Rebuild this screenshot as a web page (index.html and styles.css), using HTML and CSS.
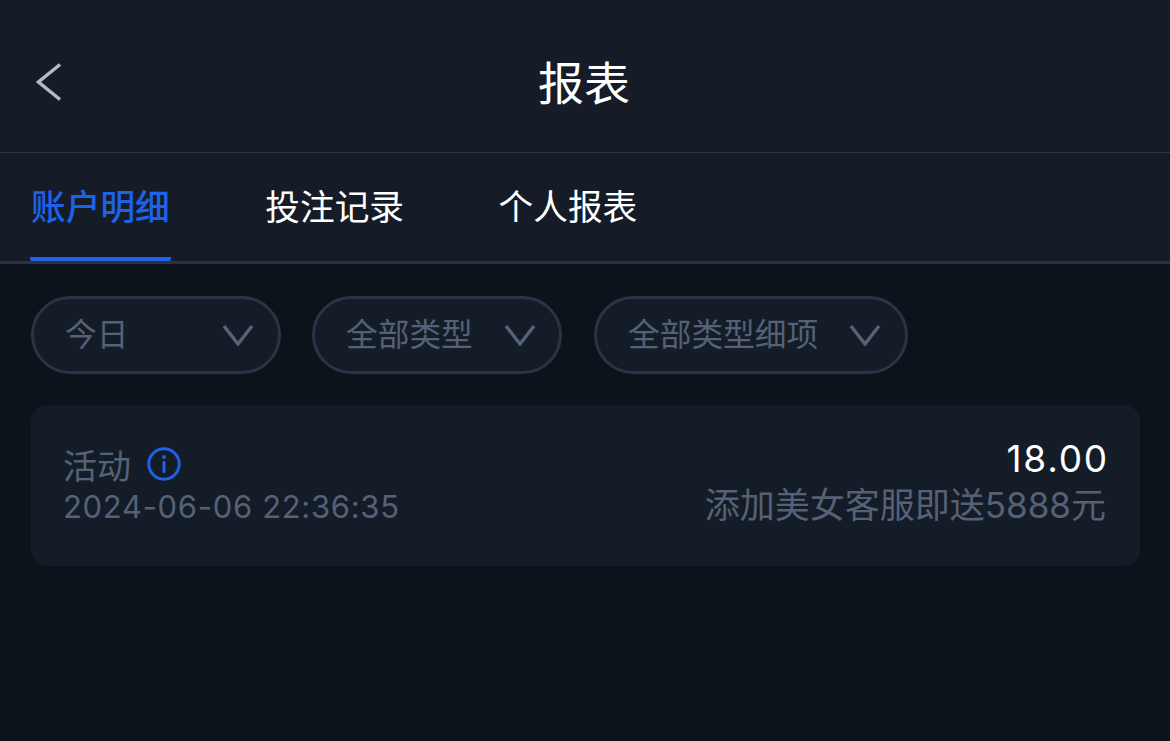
FILE: index.html
```html
<!DOCTYPE html>
<html lang="zh">
<head>
<meta charset="utf-8">
<title>报表</title>
<link rel="stylesheet" href="styles.css">
</head>
<body>
<div class="top">
  <header class="header">
    <svg class="back" width="26" height="38" viewBox="0 0 26 38"><path d="M24 1.500 L2.500 19 L24 36.500" fill="none" stroke="#b5b9c2" stroke-width="3.400"/></svg>
    <h1 class="title">报表</h1>
  </header>
  <nav class="tabs">
    <div class="tab active">账户明细</div>
    <div class="tab">投注记录</div>
    <div class="tab">个人报表</div>
  </nav>
</div>
<main class="main">
  <div class="filters">
    <div class="filter f1"><span>今日</span><svg width="32" height="22" viewBox="0 0 32 22"><path d="M2 2 L16 20 L30 2" fill="none" stroke="#56627a" stroke-width="3.400"/></svg></div>
    <div class="filter f2"><span>全部类型</span><svg width="32" height="22" viewBox="0 0 32 22"><path d="M2 2 L16 20 L30 2" fill="none" stroke="#56627a" stroke-width="3.400"/></svg></div>
    <div class="filter f3"><span>全部类型细项</span><svg width="32" height="22" viewBox="0 0 32 22"><path d="M2 2 L16 20 L30 2" fill="none" stroke="#56627a" stroke-width="3.400"/></svg></div>
  </div>
  <section class="card">
    <div class="col">
      <div class="kind"><span>活动</span>
        <svg class="info" width="34" height="34" viewBox="0 0 34 34"><circle cx="17" cy="17" r="15.200" fill="none" stroke="#1d62e8" stroke-width="3"/><circle cx="17" cy="10" r="2" fill="#1d62e8"/><rect x="15.500" y="14" width="3" height="12" rx="1" fill="#1d62e8"/></svg>
      </div>
      <div class="date">2024-06-06 22:36:35</div>
    </div>
    <div class="col right">
      <div class="amount">18.00</div>
      <div class="desc">添加美女客服即送5888元</div>
    </div>
  </section>
</main>
</body>
</html>
```
FILE: styles.css
```css
* { box-sizing: border-box; }
html, body { margin: 0; height: 100%; }
body {
  background: #0d131a;
  font-family: Inter, "Noto Sans CJK SC", sans-serif;
  overflow: hidden;
}
.top { background: #151c28; }
.header {
  height: 153px;
  border-bottom: 1px solid #2c3341;
  display: flex;
  align-items: center;
  justify-content: center;
  position: relative;
}
.back { position: absolute; left: 36px; top: 63px; }
.title {
  margin: 14px 2px 0 0;
  font-size: 46px;
  font-weight: 400;
  line-height: 60px;
  color: #fff;
}
.tabs {
  height: 111px;
  border-bottom: 3px solid #2a3142;
  display: flex;
  gap: 94.500px;
  padding-left: 30px;
}
.tab {
  height: 108px;
  font-size: 34.700px;
  line-height: 108px;
  color: #fff;
  white-space: nowrap;
}
.tab.active {
  padding: 0 1px;
  color: #1d62e8;
  font-weight: 500;
  border-bottom: 4px solid #1d62e8;
  border-radius: 2px;
}
.main { padding: 32px 31px 0; }
.filters { display: flex; gap: 32px; }
.filter {
  height: 78px;
  border: 3px solid #2a3444;
  border-radius: 39px;
  background: #141c28;
  display: flex;
  align-items: center;
  justify-content: space-between;
  color: #566176;
  font-size: 31.700px;
  white-space: nowrap;
}
.filter span { margin-top: -7px; }
.f1 { width: 250px; margin-right: -1px; padding: 0 24px 0 31px; }
.f2 { width: 250px; padding: 0 23px 0 31px; }
.f3 { width: 314px; padding: 0 24px 0 31px; }
.card {
  margin-top: 31px;
  width: 1109px;
  height: 161px;
  background: #141c28;
  border-radius: 16px;
  display: flex;
  justify-content: space-between;
  padding: 37px 31px 0 32px;
}
.col { display: flex; flex-direction: column; }
.right { align-items: flex-end; }
.kind {
  display: flex;
  align-items: center;
  gap: 16px;
  height: 44px;
  font-size: 34px;
  color: #566176;
}
.info { flex: none; }
.date {
  margin-top: -1px;
  font-size: 31px;
  line-height: 44px;
  letter-spacing: 0.680px;
  color: #566176;
  white-space: nowrap;
}
.amount {
  margin-top: -5px;
  font-size: 37px;
  line-height: 44px;
  letter-spacing: 1.800px;
  color: #fff;
}
.desc {
  margin: 2px 3px 0 0;
  font-size: 35px;
  line-height: 44px;
  color: #566176;
  white-space: nowrap;
}
```
